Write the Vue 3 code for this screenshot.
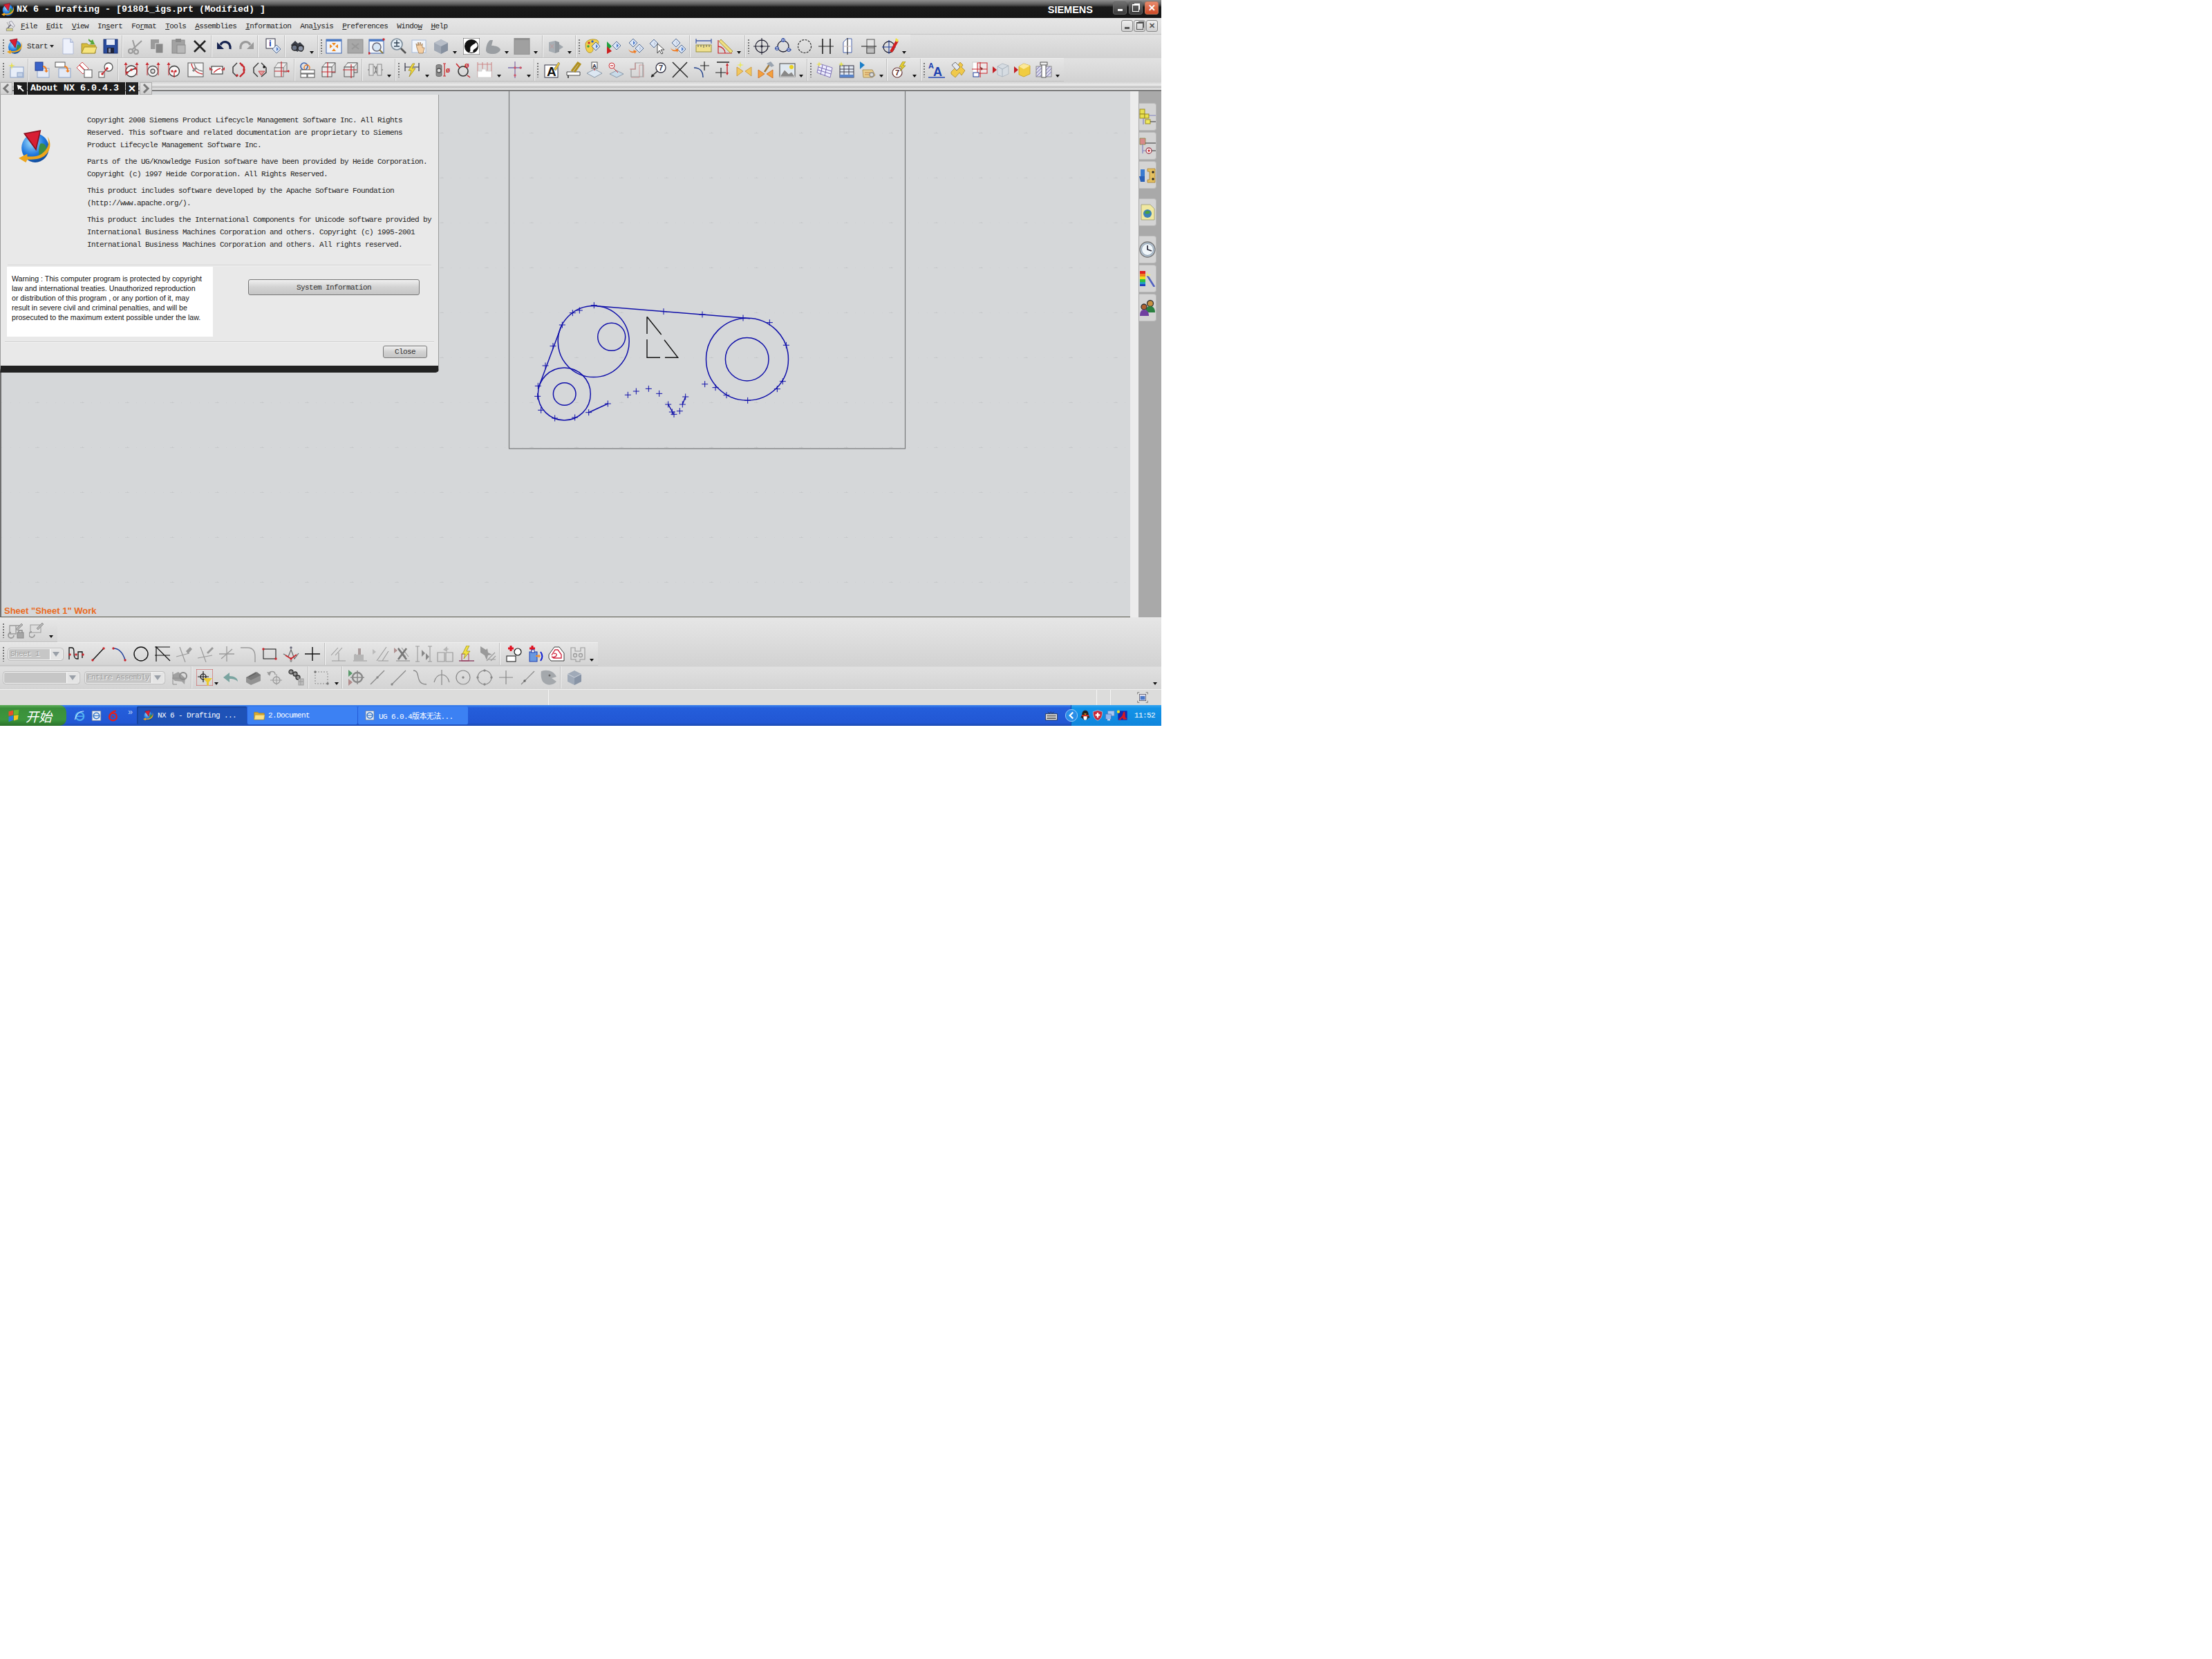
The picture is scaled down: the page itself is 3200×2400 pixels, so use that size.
<template>
  <div class="screen">
    <header class="title-bar">
      <svg class="title-logo" viewBox="0 0 24 24" v-html="icons.logo"></svg>
      <span class="title-text">NX 6 - Drafting - [91801_igs.prt (Modified) ]</span>
      <span class="siemens">SIEMENS</span>
      <div class="win-btns">
        <button class="win-btn"><i class="glyph-min"></i></button>
        <button class="win-btn"><i class="glyph-max"></i></button>
        <button class="win-btn win-close">✕</button>
      </div>
    </header>

    <nav class="menu-bar">
      <svg class="menu-icon" viewBox="0 0 24 24" v-html="icons.menuTool"></svg>
      <div class="menu-items">
        <span v-for="m in menus" :key="m.t">{{ m.t.slice(0, m.u) }}<u>{{ m.t[m.u] }}</u>{{ m.t.slice(m.u + 1) }}</span>
      </div>
      <div class="doc-btns">
        <button class="doc-btn"><i class="glyph-min dark"></i></button>
        <button class="doc-btn"><i class="glyph-max dark"></i></button>
        <button class="doc-btn">✕</button>
      </div>
    </nav>

    <div v-for="(row, r) in topRows" :key="r" class="tb-row">
      <div class="tb-wrap">
        <template v-for="(it, i) in row" :key="i">
          <i v-if="it.kind === 'space'" class="tb-space" :style="{ marginLeft: it.n + 'px' }"></i>
          <i v-else-if="it.kind === 'sep'" class="tb-sep"></i>
          <i v-else-if="it.kind === 'grip'" class="tb-grip"></i>
          <i v-else-if="it.kind === 'arrow'" class="tb-arrow"></i>
          <span v-else-if="it.kind === 'start'" class="start-cmd">
            <svg viewBox="0 0 24 24" v-html="icons.logo"></svg>
            <span>Start</span>
            <i class="tri"></i>
          </span>
          <span v-else class="tb-icon"><svg viewBox="0 0 24 24" v-html="icons[it.name]"></svg></span>
        </template>
      </div>
    </div>

    <div class="tab-band"></div>

    <main class="work">
      <section class="canvas">
        <svg class="sheet" viewBox="0 132 1636 761">
          <defs>
            <pattern id="gridp" x="54" y="452" width="65" height="65" patternUnits="userSpaceOnUse">
              <path d="M-3 0h6M0 -1v2M62 0h6M0 64v2" stroke="#bdbfc1" stroke-width="1" fill="none" />
              <path d="M13 0h1M26 0h1M39 0h1M52 0h1" stroke="#c6c8ca" stroke-width="1" fill="none" />
            </pattern>
          </defs>
          <rect x="0" y="132" width="1636" height="761" fill="url(#gridp)" />
          <rect x="736.5" y="128" width="573" height="521" fill="none" stroke="#77797b" stroke-width="1.2" />
          <g fill="none" stroke="#1010aa" stroke-width="1.5">
            <circle cx="858.7" cy="494" r="51.5" />
            <circle cx="884.7" cy="487.3" r="20" />
            <circle cx="816.3" cy="570" r="38" />
            <circle cx="816.7" cy="570" r="16.3" />
            <circle cx="1081" cy="519.7" r="59.5" />
            <circle cx="1080.7" cy="519.7" r="31.3" />
            <path d="M863.3 442.7L1085 460.7M779.3 560L812.7 470M851.7 596.7L879.3 584M966.7 585L975 600M987.3 585L991.7 574" />
          </g>
          <path d="M936 458.3V483M936 491V517.3H955M962 517.3H980.7L961 491.7M956.7 484L936 458.3" fill="none" stroke="#111" stroke-width="1.4" />
          <g stroke="#1010aa" stroke-width="1">
            <path v-for="(p, i) in marks" :key="i" :d="crossPath(p)" />
          </g>
        </svg>
        <span class="sheet-label">Sheet "Sheet 1" Work</span>
      </section>
      <aside class="side-gap"></aside>
      <aside class="res-bar">
        <div v-for="t in resTabs" :key="t.n" class="res-tab" :class="{ spaced: t.gap }">
          <svg viewBox="0 0 24 24" v-html="icons[t.n]"></svg>
        </div>
      </aside>
    </main>

    <div class="low-block">
      <div v-for="(row, r) in lowRows" :key="r" class="low-row">
        <div class="tb-wrap low-wrap" :class="{ flat: r === 2 }">
          <template v-for="(it, i) in row" :key="i">
            <i v-if="it.kind === 'space'" class="tb-space" :style="{ marginLeft: it.n + 'px' }"></i>
            <i v-else-if="it.kind === 'sep'" class="tb-sep"></i>
            <i v-else-if="it.kind === 'grip'" class="tb-grip"></i>
            <i v-else-if="it.kind === 'arrow'" class="tb-arrow"></i>
            <i v-else-if="it.kind === 'end'" class="tb-arrow tb-end"></i>
            <span v-else-if="it.kind === 'combo'" class="combo" :style="{ width: it.w + 'px' }">
              <span class="combo-text">{{ it.text }}</span>
              <i class="combo-btn"></i>
            </span>
            <span v-else class="tb-icon"><svg viewBox="0 0 24 24" v-html="icons[it.name]"></svg></span>
          </template>
        </div>
      </div>
    </div>

    <footer class="status-bar">
      <i class="st-cell st-a"></i>
      <i class="st-cell st-b"></i>
      <i class="st-cell st-c"></i>
      <svg class="st-icon" viewBox="0 0 24 24" v-html="icons.fullscreen"></svg>
    </footer>

    <div class="taskbar">
      <div class="start-btn">
        <svg viewBox="0 0 24 24" v-html="icons.flag"></svg>
        <span>开始</span>
      </div>
      <div class="quick">
        <svg viewBox="0 0 24 24" v-html="icons.ie"></svg>
        <svg viewBox="0 0 24 24" v-html="icons.ie2"></svg>
        <svg viewBox="0 0 24 24" v-html="icons.red6"></svg>
        <span class="more">»</span>
      </div>
      <div class="task active">
        <svg viewBox="0 0 24 24" v-html="icons.logo"></svg>
        <span>NX 6 - Drafting ...</span>
      </div>
      <div class="task">
        <svg viewBox="0 0 24 24" v-html="icons.folder"></svg>
        <span>2.Document</span>
      </div>
      <div class="task">
        <svg viewBox="0 0 24 24" v-html="icons.ie2"></svg>
        <span>UG 6.0.4版本无法...</span>
      </div>
      <svg class="kbd" viewBox="0 0 24 24" v-html="icons.keyboard"></svg>
      <div class="tray">
        <svg class="tray-first" viewBox="0 0 24 24" v-html="icons.chev"></svg>
        <svg viewBox="0 0 24 24" v-html="icons.qq"></svg>
        <svg viewBox="0 0 24 24" v-html="icons.shield"></svg>
        <svg viewBox="0 0 24 24" v-html="icons.netw"></svg>
        <svg viewBox="0 0 24 24" v-html="icons.trayRed"></svg>
        <span class="clock">11:52</span>
      </div>
    </div>

    <!-- About dialog, floats over the drawing area -->
    <div class="about">
      <div class="about-tab">
        <i class="tab-nav">
          <svg viewBox="0 0 12 16"><path d="M9 2L3 8l6 6" fill="none" stroke="#777" stroke-width="3" /></svg>
        </i>
        <i class="tab-pin">
          <svg viewBox="0 0 12 12"><path d="M2 2l8 8M2 2l4 1-3 3z" stroke="#fff" stroke-width="2" fill="#fff" /></svg>
        </i>
        <span class="tab-title">About NX 6.0.4.3</span>
        <i class="tab-x">✕</i>
        <i class="tab-nav">
          <svg viewBox="0 0 12 16"><path d="M3 2l6 6-6 6" fill="none" stroke="#777" stroke-width="3" /></svg>
        </i>
      </div>
      <div class="about-body">
        <div class="about-top">
          <svg class="about-logo" viewBox="0 0 24 24" v-html="icons.logo"></svg>
          <div class="about-copy">
            <p v-for="(para, i) in paragraphs" :key="i"><span v-for="(l, j) in para" :key="j">{{ l }}</span></p>
          </div>
        </div>
        <hr class="about-rule" />
        <div class="about-mid">
          <div class="warning">
            <span v-for="(l, i) in warning" :key="i">{{ l }}</span>
          </div>
          <button class="sys-btn">System Information</button>
        </div>
        <hr class="about-rule low" />
        <div class="about-foot">
          <button class="close-btn">Close</button>
        </div>
      </div>
    </div>
  </div>
</template>

<script setup>
const L = (d, c = '#333', w = 1.3) => `<path d="${d}" fill="none" stroke="${c}" stroke-width="${w}"/>`
const F = (d, c, s = 'none') => `<path d="${d}" fill="${c}" stroke="${s}" stroke-width=".8"/>`
const R = (x, y, w, h, f, s = 'none') => `<rect x="${x}" y="${y}" width="${w}" height="${h}" fill="${f}" stroke="${s}"/>`
const C = (x, y, r, f = 'none', s = '#333', w = 1.3) => `<circle cx="${x}" cy="${y}" r="${r}" fill="${f}" stroke="${s}" stroke-width="${w}"/>`
const T = (x, y, t, c, size = 12) => `<text x="${x}" y="${y}" fill="${c}" font-size="${size}" font-weight="700" font-family="Liberation Sans, sans-serif">${t}</text>`
const D = (x, y, c = '#4a78c8') => F(`M${x} ${y - 6}l6 6-6 6-6-6z`, '#dbe6f6', '#34507f') + F(`M${x} ${y - 3}l3 3-3 3z`, c)

const g = '#9a9a9a'
const g2 = '#b5b5b5'
const red = '#c8262c'
const blue = '#1f3f9a'

const dot = (x, y, c = red) => C(x, y, 1.7, c, 'none', 0)
const redArrows = L('M4 20V4M20 20V4', red, 1) + F('M4 1l-2.5 4h5zM20 1l-2.5 4h5z', red)

const icons = {
  logo:
    '<defs><radialGradient id="lg" cx=".38" cy=".3" r=".8"><stop offset="0" stop-color="#a8e4ff"/><stop offset=".55" stop-color="#1f78de"/><stop offset="1" stop-color="#0a3d88"/></radialGradient></defs>' +
    '<ellipse cx="11.5" cy="13" rx="9.5" ry="10" fill="url(#lg)"/>' +
    F('M15 10c3-1 5 2 4 5-1 3-4 4-5 3 0-3 0-6 1-8z', '#3d8c46') +
    F('M20 5c4 6 1 13-5 15-3 1-7 1-9 1l-1 2-5-3 6-3 0 2c3 0 7 0 10-2 4-3 6-7 4-12z', '#eda51c') +
    F('M4 3l11-2-3 13z', '#d81e34', '#8a0f1e'),
  menuTool: L('M3 19L12 8', '#556', 2) + F('M8 4l5-2 6 9-2 3-7-6z', '#e8e8ee', '#667') + R(3, 16, 12, 5, '#d8d48a', '#888') + L('M4 4l5 9', '#888', 1),

  new: F('M5 1h11l4 5v17H5z', '#eef2fc', '#a7b4d4') + L('M16 1v5h4', '#a7b4d4'),
  open: F('M1 8h8l2 2h10v12H1z', '#d8bc3a', '#9a8420') + F('M1 22l4-9h18l-3 9z', '#f6e47e', '#9a8420') + F('M11 1l4 3 2-2 3 7-7 0 2-2-4-3z', '#58a83c'),
  save: R(2, 2, 20, 20, '#2a4c9c', '#172f70') + R(6, 2, 12, 8, '#e6ebf6') + R(7, 14, 10, 8, '#20243a') + R(9, 15, 3, 6, '#8a93ad'),
  cut: C(5, 19, 3, 'none', g, 2) + C(13, 20, 3, 'none', g, 2) + L('M7 17L21 4M12 17L8 3', g, 2),
  copy: R(3, 2, 12, 14, g) + R(10, 8, 11, 14, '#888', '#ddd'),
  paste: R(3, 3, 18, 19, '#a2a2a2', '#888') + R(8, 1, 8, 5, '#8a8a8a') + R(10, 10, 12, 12, '#b8b8b8', '#8a8a8a'),
  del: L('M4 4L20 20M20 4L4 20', '#222', 2.6),
  undo: L('M6 10C9 3 21 4 20 16', '#15224f', 3.2) + F('M1 6l10 10H1z', '#15224f'),
  redo: L('M18 10C15 3 3 4 4 16', g, 3.2) + F('M23 6L13 16h10z', g),
  info: R(2, 1, 13, 14, '#fff', '#334') + T(6, 12, 'i', '#2036a0', 13) + D(17, 16),
  binoc: F('M2 10l6-6 4 4 3-2 6 6-3 8-5-3-1 3-7-3z', '#3b3f48') + C(7, 14, 4, '#6b7486', '#222') + C(16, 15, 4, '#8a92a4', '#222'),
  fit: R(1, 2, 22, 20, '#f0f4fa', '#3c63ad') + R(1, 2, 22, 3, '#4f7ec8') + F('M6 9l4 3-4 3zM18 9l-4 3 4 3zM9 7l3 4 3-4zM9 19l3-4 3 4z', '#ef8a20'),
  fitOff: R(1, 2, 22, 20, '#a8a8a8', '#909090') + L('M7 8l10 8M17 8L7 16', '#989898', 2),
  zoomWin: R(1, 2, 21, 20, '#f4f7fb', '#3c63ad') + R(1, 2, 21, 3, '#4f7ec8') + C(12, 13, 6, '#d6e6f4', '#667', 1.5) + L('M16 17l5 5', '#8a7a40', 2.2) + dot(22, 2) + dot(1, 22),
  zoomPM: C(10, 9, 8, '#e2ecf4', '#7a8a98', 1.6) + L('M6 7h8M10 3v8M6 12h8', '#345', 1.5) + L('M16 15l7 7', '#555', 2.6),
  pan: R(1, 3, 20, 18, '#f2f6fc', '#a9bbd8') + F('M8 14l-1-6 2 3 1-5 1 5 2-5 1 5 2-3 0 6 3 0-2 8H11z', '#f4cfa4', '#a07a50'),
  cube: F('M12 2l10 5v11l-10 5-10-5V7z', '#a0a8b4') + F('M12 12l10-5v11l-10 5z', '#8791a0') + F('M2 7l10-5 10 5-10 5z', '#b8bec8'),
  shade: R(0, 0, 24, 24, '#fff', '#444') + C(12, 12, 9.5, '#fff', '#111', 1.2) + F('M12 2.5a9.5 9.5 0 0 0-4 18c5-1 0-6 4-9 3-3 6-3 7-6-2-2-4-3-7-3z', '#111') + F('M21 12a9.5 9.5 0 0 1-6 9c-2-3 1-5 3-6z', '#111'),
  solid: F('M2 18c0-6 2-12 6-15h4l-2 8c6 0 12 2 13 6-2 4-6 6-11 6-6 0-10-2-10-5z', '#9a9ea2'),
  block: R(1, 0, 22, 24, '#a0a0a0', '#8a8a8a') + R(1, 0, 22, 3, '#8f8f8f'),
  view: F('M2 6l9-2v18l-9-3z', '#a8aeb4') + F('M11 4l6 2v14l-6 2z', '#92989e') + F('M17 9l6 4-6 4z', '#a0a6ac') + L('M4 9l5 6M9 9l-5 6', '#c09898', 1),

  palette: F('M2 9C2 3 12 0 19 3c4 3 1 8-3 8-3 0-3 3-3 5 0 4-3 6-6 5-4-1-5-7-5-12z', '#f2d04c', '#a88a20') + dot(7, 7, '#d03030') + dot(12, 5, '#3060c0') + dot(6, 12, '#30a040') + D(17, 12),
  dA: F('M2 5l7 7-7 7z', '#20a040') + F('M2 12l7 7-7 4z', '#cc2020') + D(16, 11),
  dB: D(9, 7) + D(18, 15, '#c0c8d8') + F('M2 16c3 4 6 4 8 3l-1-2 5 2-3 4 0-2c-3 1-7 0-9-5z', '#ef7a20'),
  dC: D(8, 8, '#c8d0e0') + F('M13 8l0 14 3-4 3 5 2-1-3-5 5 0z', '#fff', '#222'),
  dD: D(9, 7, '#c8d0e0') + D(17, 16) + F('M1 14c3 4 6 4 8 3l-1-2 5 2-3 4 0-2c-3 1-7 0-9-5z', '#ef7a20'),
  ruler: R(1, 10, 22, 10, '#efe08e', '#9a9040') + L('M4 10v3M8 10v3M12 10v4M16 10v3M20 10v3', '#776') + L('M1 4h22', blue, 1.2) + L('M1 1v7M23 1v7', blue, 1),
  angle: L('M2 3v19h20', red, 1.2) + L('M2 12a11 10 0 0 1 10 10', red) + F('M3 5l3-3 17 17-3 3z', '#eedd80', '#998830'),
  cross: C(12, 12, 9, 'none', '#223', 1.3) + L('M12 0v24M0 12h24', '#223', 1.1) + dot(12, 12, '#223'),
  circPts: C(12, 12, 8, 'none', '#223') + C(12, 3, 2.5, '#dde', blue, 1) + C(3, 15, 2.5, '#dde', blue, 1) + C(20, 17, 2.5, '#dde', blue, 1) + L('M12 0v6M0 15h6M17 17h7', blue, 1),
  circDash: `<circle cx="12" cy="12" r="9.5" fill="none" stroke="#333" stroke-width="1.2" stroke-dasharray="3 1.5"/>`,
  parallel: L('M7 1v22M18 1v22', '#222', 1.6) + L('M1 12h22', '#222', 1),
  sheetLine: F('M6 6l5-5h7v20H6z', '#fff', blue) + L('M12 0v24', '#222', 1.1) + L('M6 12h12', '#cbb', 1),
  cylLine: R(9, 2, 11, 20, '#e4e4e4', '#555') + R(9, 14, 11, 8, '#c0c0c0', '#555') + L('M1 12h22', '#333', 1.2),
  crossWand: C(10, 13, 8, 'none', '#223') + L('M10 3v20M0 13h20', blue, 1.1) + L('M22 4L13 20', '#d02020', 4) + F('M20 0l4 3-2 3-3-2z', '#f0e040'),

  sheetNew: R(4, 8, 19, 15, '#e8eef8', '#8ba2c8') + R(14, 16, 8, 6, '#c4d2e6', '#8ba2c8') + F('M6 1l1 4 4 1-4 1-1 5-1-5-4-1 4-1z', '#e6e050'),
  a1: R(6, 10, 17, 13, '#e4eaf6', '#8ba2c8') + R(3, 1, 11, 12, '#3a62c8', '#1f3a90') + F('M14 6c4 0 6 3 6 7l2 0-3 3-3-3 2 0c0-3-2-5-4-5z', '#ee7d20'),
  a2: R(6, 10, 17, 13, '#e4eaf6', '#8ba2c8') + R(1, 1, 14, 7, '#fff', '#555') + F('M14 6c4 0 6 3 6 7l2 0-3 3-3-3 2 0c0-3-2-5-4-5z', '#ee7d20'),
  a3: F('M1 9L9 1l9 9-8 8z', '#fff', red) + L('M5 5l9 9', red) + R(12, 12, 11, 11, '#fff', '#555'),
  a4: R(2, 15, 8, 8, '#fff', '#555') + C(16, 8, 6, '#fff', '#555') + L('M7 18L14 10', red, 1.4) + dot(7, 18) + dot(14, 10),
  b1: C(12, 14, 8, '#f8f8f8', '#333', 1.3) + L('M6 16l6-4 6-2', '#333', 1.4) + dot(6, 16) + dot(12, 12) + dot(18, 10) + redArrows,
  b2: C(12, 14, 7.5, '#f4f4f4', '#555') + C(12, 14, 3, '#ddd', '#555') + redArrows,
  b3: C(12, 14, 7.5, '#f8f8f8', '#333') + L('M12 14v9', red) + dot(9, 14) + dot(14, 14) + L('M4 20V5', red, 1) + F('M4 1l-2.5 4h5z', red),
  b4: R(1, 2, 22, 20, '#f4f4f4', '#555') + L('M6 3c1 8 8 14 16 15', red) + L('M10 3c1 6 5 10 12 11', '#777') + L('M8 14l5-5', '#888', 3),
  b5: R(4, 7, 16, 11, '#fff', '#222') + L('M1 12h5M18 12h5', red, 1.2) + L('M7 16c3-2 4-5 10-6', red) + F('M1 8l3 3-3 1zM23 8l-3 3 3 1z', red),
  b6: L('M10 2L4 8v8l6 6M14 2l6 6v8l-6 6', '#333', 1.4) + dot(17, 5) + dot(20, 12) + dot(10, 20) + L('M14 2l6 6v8l-6 6', red, 2.4),
  b7: L('M10 2L3 9v7l6 6M14 2l7 7v7l-7 6', '#333', 1.4) + F('M10 14l4 6 5-6z', '#e0a0a0', red) + dot(18, 8, '#111'),
  b8: R(7, 2, 13, 13, 'none', '#777') + F('M2 9l5-7h13l-5 7z', '#eee', '#777') + R(2, 9, 13, 13, '#e8e8e8', '#777') + L('M12 0v22M2 14h22', red, 1.2) + F('M23 12v4l-3-2z', red),
  c1: C(7, 7, 5, 'none', '#3c63ad', 1.6) + C(11, 9, 4, 'none', '#ee7d20', 1.4) + R(2, 12, 20, 5, '#fff', '#555') + R(2, 18, 9, 5, '#fff', '#555') + R(12, 18, 10, 5, '#fff', '#555'),
  c2: R(7, 2, 14, 14, 'none', '#555') + F('M2 8l5-6h14l-5 6z', '#f2f2f2', '#555') + R(2, 8, 14, 14, '#e8e8e8', '#555') + L('M10 1v22M1 15h20', red, 1.2),
  c3: R(8, 2, 14, 14, 'none', '#555') + F('M3 8l5-6h14l-5 6z', '#f2f2f2', '#555') + R(3, 8, 14, 14, '#e0e0e0', '#555') + L('M13 4v20M1 12h20', red, 1.2),
  d1: R(3, 4, 6, 16, '#e2e2e2', '#888') + R(15, 4, 6, 16, '#e2e2e2', '#888') + L('M10 7c3 0 3 10 4 10M10 17c3 0 3-10 4-10', '#777') + L('M1 12h2M21 12h2', '#888'),
  e1: L('M2 8h20M2 2v12M22 2v12', '#334', 1.2) + F('M13 3l-6 10h4l-3 9 9-12h-5l4-7z', '#f0da3c', '#a08c20'),
  e2: F('M4 6c0-2 8-2 8 0v14c0 2-8 2-8 0z', '#8a8a8a', '#555') + C(8, 13, 3, '#ddd', '#555') + L('M16 3v18M14 3h4M14 21h4', red, 1.2) + T(18, 16, 'ø', red, 10),
  e3: C(12, 14, 7, 'none', '#333', 1.6) + L('M2 3l5 6M18 20l4 3', red, 1.5) + T(14, 9, 'ø', red, 11),
  e4: L('M2 4h20M2 1v22M22 1v22M9 1v12M16 1v12', '#c88', 1.1) + F('M2 14h6v-3h6v3h8v9H2z', '#fff', '#ccc'),
  e5: L('M2 9h20', '#6a5ca8', 1.3) + L('M12 0v24', '#8a70a8', 1.3) + dot(12, 9, '#cc5566') + dot(20, 9, '#cc5566') + dot(12, 20, '#cc5566'),
  noteA: R(2, 5, 19, 18, '#fff', '#334') + T(5, 21, 'A', '#111', 19) + F('M15 11L22 1l2 2-6 10z', '#e8c040', '#886'),
  noteP: F('M3 15h19v5H3z', '#fff', '#222') + L('M5 20v5', '#111', 1.3) + L('M10 14L19 2l3 2-8 11', '#b09020', 3),
  noteA2: F('M1 17l11-6 11 6-11 6z', '#dce7f2', '#789') + L('M12 13V9', red, 1.2) + R(8, 1, 8, 9, '#fff', '#555') + T(9, 9, 'A', '#223', 8),
  noteM: F('M3 18l10-5 10 5-10 5z', '#c8dae8', '#789') + L('M7 8l8 8', red, 1) + C(6, 6, 4, '#fff', red, 1) + L('M4 6h4', red),
  stepDim: F('M3 23h12V5h6v18', 'none', '#c88') + L('M3 11v11h17V2H9v9z', '#999', 1.2) + L('M1 11h9M9 2v9', '#c88', 1),
  balloon: C(15, 9, 7, '#fff', '#334', 1.3) + T(12, 13, '7', '#334', 11) + L('M10 14L1 22', '#222', 1.3) + F('M1 23l1-5 4 3z', '#222'),
  bigX: L('M1 1l22 22M22 1L1 23', '#222', 1.4),
  curveX: L('M1 9c8 0 13 5 13 14', '#1f3f8a', 1.5) + L('M16 0v13M10 6h13', '#222', 1.2),
  dimX: L('M3 1h18', '#222', 1.5) + L('M1 16h15M9 9v14', '#222', 1.2) + L('M18 4v14', red, 1.4) + F('M18 2l-2 4h4zM18 20l-2-4h4z', red),
  wandX: F('M1 8l9 6-9 7zM22 8l-9 6 9 7z', '#f2c860', '#c89030') + F('M6 0l1 4 4 1-4 1-1 4-1-4-4-1 4-1z', '#e8e860'),
  hammerX: F('M1 12l9 6-9 6zM22 12l-9 6 9 6z', '#f5a03c', '#c86820') + L('M10 15L18 3', '#a07838', 2.4) + F('M13 3l6-3 5 6-4 2z', '#9aa4b0'),
  image: R(1, 3, 22, 19, '#dfe8f0', '#444') + F('M1 22l7-10 6 6 4-3 5 7z', '#888', '#eee') + C(18, 8, 3, '#e8d020', 'none', 0),
  tableNew: F('M4 3l19 6-3 14L1 16z', '#eef', '#6a5ca8') + L('M3 8l19 6M2 12l19 6M9 5L6 19M15 7l-3 14', '#6a5ca8', .9) + F('M4 0l1 3 3 1-3 1-1 3-1-3-3-1 3-1z', '#e8e060'),
  tableEdit: R(3, 6, 20, 17, '#dfe6f0', '#334') + L('M3 11h20M3 15h20M9 6v17M16 6v17', '#334', .9) + R(3, 19, 20, 4, '#5a84c8') + F('M5 0l1 3 3 1-3 1-1 3-1-3-3-1 3-1z', '#e0e050'),
  tag: F('M5 12l14 0 4 8-4 3H6z', '#ead090', '#a08040') + C(18, 19, 3, '#ddd', '#888') + F('M1 0l7 5-7 6z', '#1b7ec8') + L('M8 16h8M8 19h6', '#c08040', 1),
  key7: C(8, 16, 7, '#fff', '#633', 1.2) + T(5, 20, '7', '#522', 11) + F('M16 0l-5 8h4l-3 6 8-8h-4l4-6z', '#e8d030', '#988a20'),
  AA: T(0, 10, 'A', '#1c3fb0', 11) + T(7, 21, 'A', '#1c3fb0', 18) + L('M0 23h24', '#1c3fb0', 1.4),
  wrench: F('M2 15l10-10 3-4 4 4-2 3 5 5-5 7-3-4-6 7-6-5z', '#f0c94a', '#a8882c') + F('M3 5l5-4 7 7-5 5z', '#e4e8ef', '#555'),
  sheetBox: R(2, 1, 11, 21, '#fff', '#ccc') + R(9, 2, 14, 15, '#eee8e8', red) + L('M13 1v22M1 11h22', red, 1.1) + R(3, 16, 8, 6, '#fff', blue) + F('M12 7l5 3-2 3z', '#883333'),
  cubeRed: F('M0 7l6 5-6 5z', '#c42026') + F('M14 3l9 3v12l-9 4-7-3V7z', '#d6dce2', '#a8b2bc') + L('M7 7l7 4 9-5M14 11v11', '#a8b2bc', 1),
  cubeYel: F('M0 7l6 5-6 5z', '#c42026') + F('M14 3l9 3v12l-9 4-7-3V7z', '#f0cc40', '#c8a020') + F('M7 7l7 4 9-5-9-3z', '#fbe898'),
  hatchBolt: R(1, 7, 22, 15, '#d8d8ea', '#888') + L('M1 12l5-5M1 17l10-10M1 22L16 7M6 22L21 7M11 22l12-12M16 22l7-7', '#7a72b0', 1) + R(9, 3, 6, 20, '#fff', '#555') + R(7, 1, 10, 4, '#eee', '#555'),

  lock1: L('M3 5h9v12H3zM12 5h6', g, 1.3) + L('M5 15a4 4 0 1 0 4 4', g, 1.8) + F('M12 10l8-8 2 2-8 8z', g2, '#888') + R(14, 15, 9, 8, '#a5a5a5', '#888') + L('M16 15v-3h5v3', '#888', 1.4),
  lock2: R(2, 4, 15, 11, '#ddd', g) + L('M4 14a4 4 0 1 0 4 4', g, 1.8) + F('M11 9l8-8 2 2-8 8z', g2, '#888'),

  sk1: L('M1 20V3h4c3 0 3 4 3 8 0 3 0 8 4 8h2V9h6v9', '#111', 1.3) + dot(2, 13) + dot(11, 13) + dot(21, 13),
  sk2: L('M4 21L20 4', '#111', 1.4) + dot(4, 21) + dot(20, 4),
  sk3: L('M3 4c8 0 14 7 17 17', blue, 1.4) + dot(3, 4) + dot(20, 21),
  sk4: C(12, 12, 10, 'none', '#111', 1.4),
  sk5: L('M3 1v22M1 2h22M1 14h22M3 2l20 20', '#111', 1.2),
  sk6: L('M1 16L20 11M6 2l8 22', g, 1.2) + F('M15 8l6-6 3 3-6 7z', g),
  sk7: L('M1 18l21-4M5 2l8 22', g, 1.2) + F('M14 10l8-8 2 2-8 8z', g),
  sk8: L('M1 12h22M12 1v22', g, 1.3) + L('M4 19L20 5', g, 1.2),
  sk9: L('M1 3h10c8 0 11 5 11 13v8', g, 1.4),
  sk10: R(3, 5, 18, 14, 'none', '#111') + dot(3, 5) + dot(21, 19),
  sk11: L('M1 12l7 4 4-10 5 13 6-8', '#666', 1.2) + L('M4 14l8 5 8-6', red, 1.6) + dot(12, 3, '#667') + dot(12, 19) + F('M10 21h4l-1 3h-2z', g),
  sk12: L('M12 2v20M1 12h22', '#111', 1.4),
  con1: L('M2 14L12 3M8 14L18 3', g, 1.1) + L('M3 22h20M13 10v12', g, 1.1),
  con2: L('M3 22h20M6 22V12', g, 1.2) + F('M10 22V4l4 0 0 18z', '#a89a9a') + R(4, 13, 14, 9, g2),
  con3: F('M0 5l5 4-5 4z', '#bbb') + L('M6 22L20 2M14 22L23 8M8 22h15', g, 1.1),
  con4: L('M6 3L17 16M11 3l10 13', g, 1.1) + L('M3 22h20', g) + L('M6 4l12 16M18 4L6 20', '#777', 2.6) + F('M0 3l5 4-5 4z', '#b09090'),
  con5: L('M3 1v22M21 1v22M0 1h6M18 1h6M0 23h6M18 23h6', g, 1.1) + F('M9 6l5 5-5 5zM15 11l5 5-5 5z', '#888'),
  con6: L('M1 10v13h10V10zM13 10v13h10V10z', g, 1.2) + F('M9 6l6-5v3l3 1-3 1v3z', g2),
  con7: L('M1 22h22', '#8a4060', 1.4) + R(5, 12, 10, 10, 'none', '#a04060') + F('M12 0L6 12h4l-2 7 9-11h-5l4-8z', '#f0e040', '#a09020'),
  con8: F('M1 1l8 5 2-2 1 6 6 3-6 1-2 7-3-7-6-4z', g) + L('M10 22L22 10M16 22l7-7M12 20h11', g, 1.1),
  add1: L('M8 0v8M4 4h8', '#e01020', 3) + C(18, 9, 5, '#fff', '#111', 1.2) + R(2, 15, 13, 8, '#fff', '#111'),
  add2: L('M8 0v8M4 4h8', '#e01020', 3) + R(4, 9, 11, 14, '#6a98e0', '#2040b0') + R(7, 6, 4, 4, '#fff', '#2040b0') + L('M20 9c3 4 3 9 0 13', '#1020d0', 2) + F('M13 14h4v-2l3 3-3 3v-2h-4z', '#f09030'),
  add3: F('M1 13L9 2h7l7 9v11H4l-3-4z', '#fff', '#111') + L('M5 14l5-8h4l5 7v5H8l-3-2c2 1 6 1 7-2 1-2-2-4-4-2', '#d02840', 1.4),
  add4: L('M2 3h6v5h8V3h6v17h-7v3h-6v-3H2z', g, 1.1) + C(8, 14, 2.5, 'none', g) + C(16, 14, 2.5, 'none', g),
  asm: F('M2 8l8-4 10 9-1 9-4-4-10-1-3-3zM12 2l6 4', '#a0a0a0') + L('M2 4v18l6 0M1 13h18', '#8e8e8e', 1) + C(17, 10, 5, 'none', '#8a8a8a', 2),
  filter: R(0, 0, 24, 24, 'none', '#c84040') + L('M10 3v16M2 11h16', '#111', 1.1) + C(10, 11, 4, 'none', '#111', 1.2) + F('M10 13h13l-5 6v5l-3-1v-4z', '#eccb30'),
  backArr: F('M10 5l0 5c7 0 12 3 12 8-3-3-6-4-12-4v5L1 12z', '#7aa4a0'),
  printer: F('M2 12l16-8 5 5v8L9 23 2 19z', '#939393') + F('M2 12l7 4 14-7 0-1-7-4z', '#7a7a7a') + L('M6 11l10-5', '#555', 1),
  turnAxis: L('M3 8c2-6 10-6 10 0', g, 1.5) + F('M1 4l4 6 2-5z', g) + C(15, 16, 5, 'none', g) + L('M15 7v16M6 16h17', g, 1),
  chain: C(5, 4, 3, '#8f8f8f') + C(11, 7, 3, '#8f8f8f') + C(15, 12, 3, '#8f8f8f') + R(16, 14, 7, 9, '#c0c0c0', '#999') + L('M16 18h7M19 14v9', '#999', 1),
  boxDash: `<rect x="3" y="4" width="18" height="17" fill="none" stroke="#888" stroke-dasharray="2 2"/>` + dot(3, 4, '#777') + dot(21, 21, '#777'),
  snapMove: F('M1 1l6 5-6 5z', '#5a9a6c') + F('M1 14l6 5-6 5z', '#b08a8a') + C(14, 12, 7, 'none', '#888', 2.4) + L('M14 2v20M4 12h20', '#8a8a8a', 1.6),
  sn1: L('M2 22L22 2', '#888', 1.2) + dot(12, 12, '#888'),
  sn2: L('M2 22L22 2', '#888', 1.2) + dot(2, 22, '#888'),
  sn3: L('M2 2c7 0 6 8 8 13 2 6 6 7 11 7', '#888', 1.3),
  sn4: L('M12 1v22M1 19c2-8 6-11 11-11s9 3 11 11', '#888', 1.2),
  sn5: C(12, 12, 10, 'none', '#888', 1.2) + dot(12, 12, '#888'),
  sn6: C(12, 12, 10, 'none', '#888', 1.2) + dot(12, 2, '#888') + dot(2, 12, '#888') + dot(22, 12, '#888') + dot(12, 22, '#888'),
  sn7: L('M12 2v20M2 12h20', '#888', 1.2),
  sn8: L('M3 22L22 3', '#888', 1.2) + dot(8, 17, '#666'),
  sn9: F('M1 3c8-3 18-1 22 8l-7 2 7 5c-5 6-14 6-19 1C1 16 0 8 1 3z', '#a4a8ac') + C(13, 9, 1.5, '#666', 'none', 0),
  sn10: F('M12 2l10 5v11l-10 5-10-5V7z', '#a0aab8') + F('M12 12l10-5v11l-10 5z', '#8894a6') + L('M2 7l10 5 10-5', '#cdd3db', 1),

  resAsm: R(1, 1, 7, 7, '#e8e050', '#998a20') + R(1, 8, 7, 6, '#e8e050', '#998a20') + R(8, 8, 6, 6, '#e8e050', '#998a20') + L('M14 10h10M6 14v9', '#8080c0', 1.2) + R(9, 16, 7, 6, '#f0ea60', '#998a20') + L('M16 19h8', '#333', 1),
  resPart: F('M1 1h8v9H1z', '#d88a8a', '#884') + L('M9 8h15', '#333', 1) + L('M5 10v13M5 19h5', '#8080c0', 1.2) + C(14, 19, 4, '#fff', '#a04050') + dot(14, 19) + L('M18 19h6', '#333', 1),
  resReuse: R(2, 4, 6, 16, '#3a7ad0') + F('M0 14h8v8H2z', '#2a60b8') + F('M12 3h11v20H12v-4h3V7h-3z', '#e4c060', '#a88030') + dot(20, 8, '#222') + dot(20, 18, '#222'),
  resWeb: F('M3 1h13l6 6v16H3z', '#f0e8a0', '#9a9a70') + C(12, 14, 6, '#3a80b8', 'none', 0) + F('M8 13c2-4 6-4 8-1-1 2-4 4-8 1z', '#4aa040'),
  resClock: C(12, 12, 11, '#b8c8d8', '#777', 1.3) + C(12, 12, 8.5, '#f0f6fa', '#8a9aa8', 1) + L('M12 6v6l6 2', '#223', 1.6),
  resColor: R(1, 1, 8, 4, '#e02020') + R(1, 5, 8, 4, '#f08020') + R(1, 9, 8, 4, '#e8e020') + R(1, 13, 8, 4, '#30c040') + R(1, 17, 8, 3, '#20a0c0') + R(1, 20, 8, 3, '#2040c0') + L('M12 8l10 16', '#5060c0', 2.6) + F('M11 2l2 4 4 0-3 3-2-1-2 1z', '#e8e880'),
  resUsers: C(16, 6, 4.5, '#c89040') + F('M9 19c0-6 3-9 7-9s7 3 7 9z', '#2a8040') + C(7, 11, 4, '#b06030') + F('M1 24c0-6 2-9 6-9s7 3 7 9z', '#7040a0'),

  fullscreen: R(5, 5, 14, 14, '#dde', '#445') + R(7, 9, 10, 8, '#4a78c8') + L('M1 5V1h4M19 1h4v4M1 19v4h4M19 23h4v-4', '#666', 1.2),
  flag: F('M3 5l8-2 0 8-8 2z', '#e8502a') + F('M12 3l9-1-1 8-8 1z', '#6ab82e') + F('M3 14l8-2 0 8-8 3z', '#2c7ae0') + F('M12 12l8-1-1 8-7 2z', '#f6c71e'),
  ie: C(12, 13, 8, 'none', '#4fb0f0', 3.2) + L('M5 13h14', '#4fb0f0', 2.4) + L('M20 3c-8-1-16 6-18 17', '#bfe4ff', 1.6),
  ie2: R(3, 2, 18, 20, '#e8eef6', '#6a7a90') + C(12, 12, 6, 'none', '#3878c8', 2.4) + L('M7 12h10', '#3878c8', 1.8),
  red6: C(12, 14, 7.5, 'none', '#e02020', 3.4) + L('M18 2C10 3 6 8 5 14', '#e02020', 3.4) + C(12, 14, 2, '#e02020', 'none', 0),
  folder: F('M1 5h8l2 2h12v14H1z', '#d8a830', '#9a7a18') + F('M1 21l2-10h21l-2 10z', '#fbe184', '#b89a30'),
  keyboard: R(1, 9, 22, 12, '#fff', '#222') + L('M3 12h18M3 15h18M3 18h18', '#222', 1.4) + L('M5 5l3 3 3-3 3 3 3-3', '#333', 1),
  chev: C(12, 12, 11.5, '#2a8ee8', '#bfe2ff', 1) + L('M15 6l-6 6 6 6', '#fff', 3),
  qq: F('M12 1c5 0 7 4 7 9l3 7-3 0c-1 3-4 5-7 5s-6-2-7-5H2l3-7c0-5 2-9 7-9z', '#222') + F('M8 15c0-3 8-3 8 0 0 5-1 7-4 7s-4-2-4-7z', '#fff') + F('M5 11h14l1 3H4z', '#e03020') + F('M9 8h6l-3 3z', '#f0b020'),
  shield: F('M12 1l10 3c0 10-3 16-10 19C5 20 2 14 2 4z', '#c82838', '#eee') + L('M12 6v11M7 11h10', '#fff', 3.4),
  netw: R(7, 2, 14, 11, '#a8c8f0', '#6080c0') + R(2, 9, 12, 11, '#90b8f0', '#5070b0') + R(6, 20, 6, 3, '#dde'),
  trayRed: R(2, 2, 20, 20, '#1428b0') + C(3, 4, 3.2, '#f4e420', 'none', 0) + F('M3 21l8-8 3-9 3 0 1 12 4 4-8 1-3-4-4 5z', '#d81820'),
}

function parse(str) {
  return str.split(' ').map(tok => {
    if (tok === '|') return { kind: 'sep' }
    if (tok === ':') return { kind: 'grip' }
    if (tok === 'v') return { kind: 'arrow' }
    if (tok === 'START') return { kind: 'start' }
    if (tok === 'END') return { kind: 'end' }
    if (/^[+-]\d+$/.test(tok)) return { kind: 'space', n: Number(tok) }
    return { kind: 'icon', name: tok }
  })
}

const topRows = [
  parse(': START new open save | cut copy paste del | undo redo | +3 info | binoc v +2 | : fit fitOff zoomWin zoomPM pan cube v +3 shade solid v +1 block v +3 | view v +2 | : +1 palette dA dB dC dD | +1 ruler angle v +2 | : +1 cross circPts circDash parallel sheetLine cylLine crossWand v'),
  parse(': sheetNew +1 | a1 a2 a3 a4 +1 | b1 b2 b3 b4 b5 b6 b7 b8 +2 | c1 c2 c3 | d1 v +2 | : +1 e1 +2 v e2 e3 e4 +1 v +2 e5 v +1 | : +2 noteA noteP noteA2 noteM stepDim balloon bigX curveX dimX wandX hammerX image v +2 | : +2 tableNew tableEdit tag v +1 | key7 +1 v +2 | : AA wrench sheetBox cubeRed cubeYel hatchBolt v'),
]

const lowRows = [
  parse(': lock1 lock2 v'),
  [
    ...parse(':'),
    { kind: 'combo', text: 'Sheet 1', w: 79 },
    ...parse('+4 sk1 sk2 sk3 sk4 sk5 sk6 sk7 sk8 sk9 sk10 sk11 sk12 +1 | con1 con2 con3 con4 con5 con6 con7 con8 | +1 add1 add2 add3 add4 v'),
  ],
  [
    { kind: 'combo', text: '', w: 110 },
    ...parse('+8'),
    { kind: 'combo', text: 'Entire Assembly', w: 115 },
    ...parse('+6 asm | filter -3 v backArr +1 printer turnAxis chain +1 | boxDash +2 v +1 | +1 snapMove sn1 sn2 sn3 sn4 sn5 sn6 sn7 sn8 sn9 | +1 sn10 END'),
  ],
]

const menus = [
  { t: 'File', u: 0 },
  { t: 'Edit', u: 0 },
  { t: 'View', u: 0 },
  { t: 'Insert', u: 2 },
  { t: 'Format', u: 2 },
  { t: 'Tools', u: 0 },
  { t: 'Assemblies', u: 0 },
  { t: 'Information', u: 0 },
  { t: 'Analysis', u: 3 },
  { t: 'Preferences', u: 0 },
  { t: 'Window', u: 5 },
  { t: 'Help', u: 0 },
]

const resTabs = [
  { n: 'resAsm' },
  { n: 'resPart' },
  { n: 'resReuse' },
  { n: 'resWeb', gap: true },
  { n: 'resClock', gap: true },
  { n: 'resColor' },
  { n: 'resUsers' },
]

const paragraphs = [
  [
    'Copyright 2008 Siemens Product Lifecycle Management Software Inc. All Rights',
    'Reserved. This software and related documentation are proprietary to Siemens',
    'Product Lifecycle Management Software Inc.',
  ],
  [
    'Parts of the UG/Knowledge Fusion software have been provided by Heide Corporation.',
    'Copyright (c) 1997 Heide Corporation. All Rights Reserved.',
  ],
  [
    'This product includes software developed by the Apache Software Foundation',
    '(http://www.apache.org/).',
  ],
  [
    'This product includes the International Components for Unicode software provided by',
    'International Business Machines Corporation and others. Copyright (c) 1995-2001',
    'International Business Machines Corporation and others. All rights reserved.',
  ],
]

const warning = [
  'Warning : This computer program is protected by copyright',
  'law and international treaties.  Unauthorized reproduction',
  'or distribution of this program , or any portion of it, may',
  'result in severe civil and criminal penalties, and will be',
  'prosecuted to the maximum extent possible under the law.',
]

// cross marks, in the pixel grid of the sheet detail (3x from 720,400)
const marks = [
  [418, 125], [355, 147], [325, 158], [280, 210], [240, 302], [207, 387], [175, 475], [173, 520], [188, 580],
  [248, 615], [335, 612], [395, 590], [478, 552], [565, 514], [601, 498], [655, 487], [701, 508], [740, 555],
  [757, 588], [765, 598], [790, 584], [802, 555], [815, 522], [720, 152], [888, 165], [1065, 180], [1180, 200],
  [1252, 298], [1237, 455], [1213, 488], [1085, 538], [993, 515], [945, 482], [899, 467],
]

function crossPath([x, y]) {
  const px = 720 + x / 3
  const py = 400 + y / 3
  return `M${px - 4.5} ${py}h9M${px} ${py - 4.5}v9`
}
</script>

<style>
body {
  background: #fff;
}
</style>

<style scoped>
.screen {
  position: relative;
  width: 1680px;
  height: 1050px;
  overflow: hidden;
  font-family: "Liberation Mono", "Noto Sans CJK SC", monospace;
  font-size: 11px;
  letter-spacing: -0.6px;
  color: #222;
  background: #dcdcdc;
}

svg {
  display: block;
}

button {
  font: inherit;
  letter-spacing: inherit;
  padding: 0;
}

/* title bar */
.title-bar {
  height: 26px;
  display: flex;
  align-items: center;
  background: linear-gradient(#8f8f8f 0, #5e5e5e 6px, #333 9px, #1a1a1a 10px, #161616 100%);
  color: #fff;
  position: relative;
}

.title-logo {
  width: 20px;
  height: 20px;
  margin: 2px 2px 0 2px;
  flex: none;
}

.title-text {
  font-size: 13.33px;
  font-weight: 700;
  letter-spacing: 0;
  white-space: pre;
  padding-top: 1px;
}

.siemens {
  margin-left: auto;
  font-family: "Liberation Sans", sans-serif;
  font-size: 14.5px;
  font-weight: 700;
  letter-spacing: 0;
  padding-top: 1px;
}

.win-btns {
  display: flex;
  gap: 3px;
  margin-left: 29px;
  margin-right: 4px;
  padding-bottom: 4px;
}

.win-btn {
  width: 20px;
  height: 19px;
  border: 1px solid #666;
  border-radius: 3px;
  background: linear-gradient(#6e6e6e, #3a3a3a);
  color: #fff;
  display: flex;
  align-items: center;
  justify-content: center;
}

.win-close {
  background: linear-gradient(#e98a6c, #cf4a26);
  font-size: 13px;
  font-weight: 700;
  font-family: "Liberation Sans", sans-serif;
  border-color: #c0785c;
}

.glyph-min {
  display: block;
  width: 7px;
  height: 3px;
  margin-top: 7px;
  background: #fff;
}

.glyph-max {
  display: block;
  width: 8px;
  height: 8px;
  border: 1px solid #fff;
  border-top-width: 2px;
  box-shadow: 2px -2px 0 -1px #fff;
}

.glyph-min.dark {
  background: #555;
}

.glyph-max.dark {
  border-color: #555;
  box-shadow: 2px -2px 0 -1px #555;
}

/* menu */
.menu-bar {
  height: 24px;
  display: flex;
  align-items: center;
  background: linear-gradient(#e6e6e6, #dcdcdc);
  border-bottom: 1px solid #c4c4c4;
  box-sizing: border-box;
}

.menu-icon {
  width: 18px;
  height: 18px;
  margin-left: 7px;
  flex: none;
}

.menu-items {
  display: flex;
  gap: 13px;
  margin-left: 5px;
}

.doc-btns {
  margin-left: auto;
  margin-right: 5px;
  display: flex;
  gap: 1px;
}

.doc-btn {
  width: 17px;
  height: 17px;
  border: 1px solid #888;
  border-radius: 3px;
  background: linear-gradient(#eee, #cfcfcf);
  color: #555;
  font-size: 11px;
  font-weight: 700;
  font-family: "Liberation Sans", sans-serif;
  display: flex;
  align-items: center;
  justify-content: center;
}

.doc-btn .glyph-min {
  margin-top: 6px;
}

/* toolbars */
.tb-row {
  height: 34px;
  display: flex;
  background: linear-gradient(#e2e2e2, #d2d2d2);
}

.tb-wrap {
  display: flex;
  align-items: center;
  padding: 0 4px 0 3px;
  background: linear-gradient(#e6e6e6, #d2d2d2);
  border-top: 1px solid #eee;
  border-bottom: 1px solid #c2c2c2;
  box-sizing: border-box;
  position: relative;
}

.tb-icon {
  width: 31px;
  height: 24px;
  display: flex;
  justify-content: center;
  flex: none;
}

.tb-icon svg {
  width: 24px;
  height: 24px;
}

.tb-space {
  display: block;
  width: 0;
  flex: none;
}

.tb-sep {
  display: block;
  width: 1px;
  height: 32px;
  margin: 0 2px;
  background: #f2f2f2;
  box-shadow: -1px 0 0 #c0c0c0;
  flex: none;
}

.tb-grip {
  display: block;
  width: 4px;
  height: 22px;
  flex: none;
  background-image: radial-gradient(circle, #777 0.9px, transparent 1.1px);
  background-size: 4px 4px;
}

.tb-arrow {
  width: 10px;
  height: 24px;
  flex: none;
  display: block;
  position: relative;
}

.tb-arrow::after {
  content: "";
  position: absolute;
  left: 2px;
  bottom: 1px;
  border-top: 4px solid #111;
  border-left: 3px solid transparent;
  border-right: 3px solid transparent;
}

.start-cmd {
  width: 72px;
  margin-left: 3px;
  display: flex;
  align-items: center;
  flex: none;
  font-size: 11px;
}

.start-cmd svg {
  width: 24px;
  height: 24px;
  margin-right: 5px;
}

.tri {
  border-top: 4px solid #222;
  border-left: 3px solid transparent;
  border-right: 3px solid transparent;
  margin-left: 3px;
}

.tab-band {
  height: 14px;
  background: linear-gradient(#d0d0d0 0, #ececec 5px, #bcbcbc 8px, #dedede 10px, #e2e2e2 12px, #7d7d7d 12px, #7d7d7d 14px);
}

/* work area */
.work {
  height: 761px;
  display: flex;
}

.canvas {
  position: relative;
  width: 1635px;
  background: #d5d7d9;
  border-left: 2px solid #6e6e6e;
  border-bottom: 1px solid #55554a;
  box-sizing: border-box;
  flex: none;
}

.sheet {
  position: absolute;
  left: -2px;
  top: 0;
  width: 1636px;
  height: 761px;
}

.sheet-label {
  position: absolute;
  left: 4px;
  bottom: 1px;
  font-family: "Liberation Sans", sans-serif;
  font-size: 13px;
  font-weight: 700;
  letter-spacing: 0;
  color: #ea6a1e;
}

.side-gap {
  width: 12px;
  background: #ececec;
  flex: none;
}

.res-bar {
  flex: 1;
  background: #a9a9a9;
  padding-top: 17px;
  box-sizing: border-box;
  display: flex;
  flex-direction: column;
  gap: 2px;
}

.res-tab {
  width: 25px;
  height: 40px;
  background: #d4d4d4;
  border: 1px solid #bbb;
  border-left: none;
  border-radius: 0 4px 4px 0;
  box-sizing: border-box;
  display: flex;
  align-items: center;
  justify-content: center;
  margin-left: 1px;
}

.res-tab.spaced {
  margin-top: 12px;
}

.res-tab svg {
  width: 24px;
  height: 24px;
}

/* lower toolbars */
.low-block {
  height: 104px;
  padding-top: 2px;
  box-sizing: border-box;
  background: linear-gradient(#e6e6e6, #d2d2d2 68%, #c6c6c6 68%, #e0e0e0 69%, #d4d4d4 100%);
}

.low-row {
  height: 34px;
  display: flex;
}

.low-wrap {
  background: linear-gradient(#e6e6e6, #d4d4d4);
}

.low-wrap.flat {
  width: 100%;
  background: none;
  border: none;
  padding-left: 5px;
}

.tb-end {
  margin-left: auto;
}

.combo {
  height: 17px;
  margin-left: 5px;
  flex: none;
  display: flex;
  align-items: center;
  justify-content: space-between;
  box-sizing: border-box;
  background: #c6c6c6;
  border: 1px solid #f2f2f2;
  outline: 1px solid #bdbdbd;
  border-radius: 3px;
  color: #9e9e9e;
  text-shadow: 1px 1px 0 #f4f4f4;
  overflow: hidden;
}

.low-wrap.flat .combo {
  margin-left: 0;
}

.combo-text {
  padding-left: 2px;
  white-space: nowrap;
}

.combo-btn {
  width: 17px;
  height: 15px;
  background: #e4e4e4;
  border-left: 1px solid #fff;
  position: relative;
  flex: none;
}

.combo-btn::after {
  content: "";
  position: absolute;
  left: 3px;
  top: 4px;
  border-top: 7px solid #9aa0a8;
  border-left: 5px solid transparent;
  border-right: 5px solid transparent;
}

/* status */
.status-bar {
  height: 23px;
  display: flex;
  align-items: center;
  position: relative;
  background: #dcdcdb;
  border-top: 1px solid #f0f0f0;
  box-sizing: border-box;
}

.st-cell {
  display: block;
  height: 100%;
  border-right: 1px solid #f4f4f4;
  box-sizing: border-box;
  flex: none;
}

.st-a {
  width: 794px;
}

.st-b {
  width: 793px;
}

.st-c {
  width: 20px;
}

.st-icon {
  width: 16px;
  height: 16px;
  margin-left: 38px;
}

/* taskbar */
.taskbar {
  height: 30px;
  display: flex;
  align-items: center;
  background: linear-gradient(#3f86ee 0, #245edb 4px, #2257d4 85%, #1a49b0 100%);
  color: #fff;
  letter-spacing: -0.6px;
}

.start-btn {
  width: 96px;
  height: 100%;
  background: linear-gradient(#5fae5a 0, #3a8f3a 15%, #3d963d 70%, #2a712a 100%);
  border-radius: 0 10px 10px 0;
  display: flex;
  align-items: center;
  box-sizing: border-box;
  padding-left: 10px;
  flex: none;
}

.start-btn svg {
  width: 20px;
  height: 20px;
}

.start-btn span {
  font-family: "Noto Sans CJK SC", sans-serif;
  font-size: 19px;
  font-style: italic;
  letter-spacing: 0;
  margin-left: 7px;
}

.quick {
  display: flex;
  align-items: center;
  width: 102px;
  padding-left: 11px;
  box-sizing: border-box;
  gap: 7px;
  flex: none;
}

.quick svg {
  width: 17px;
  height: 17px;
}

.more {
  font-size: 12px;
  color: #b8d0f4;
  margin-left: 6px;
  margin-top: -8px;
}

.task {
  width: 159px;
  height: 26px;
  margin-right: 1px;
  display: flex;
  align-items: center;
  padding-left: 9px;
  box-sizing: border-box;
  background: #3c81f3;
  border-radius: 2px;
  flex: none;
  white-space: nowrap;
}

.task svg {
  width: 16px;
  height: 16px;
  margin-right: 5px;
}

.task.active {
  background: #1e52b7;
  box-shadow: inset 1px 1px 2px #123a8a;
}

.kbd {
  width: 18px;
  height: 18px;
  margin-left: auto;
  margin-right: 19px;
}

.tray {
  width: 131px;
  height: 100%;
  display: flex;
  align-items: center;
  background: linear-gradient(#37a5f0 0, #1293e8 15%, #1086dc 100%);
  border-left: 1px solid #124fa8;
  box-sizing: border-box;
  gap: 2px;
  flex: none;
}

.tray svg {
  width: 16px;
  height: 16px;
}

.tray .tray-first {
  margin-left: -9px;
  width: 18px;
  height: 18px;
  margin-right: 1px;
}

.clock {
  margin-left: 7px;
  font-size: 11px;
}

/* about dialog */
.about {
  position: absolute;
  left: 0;
  top: 119px;
  width: 635px;
}

.about-tab {
  height: 18px;
  display: flex;
  align-items: stretch;
  width: 220px;
}

.about-tab i {
  font-style: normal;
}

.tab-nav {
  width: 18px;
  background: linear-gradient(#e4e4e4, #cfcfcf);
  border: 1px solid #aaa;
  box-sizing: border-box;
  display: flex;
  align-items: center;
  justify-content: center;
}

.tab-nav svg {
  width: 12px;
  height: 16px;
}

.tab-pin {
  width: 19px;
  margin-left: 2px;
  background: #1c1c1c;
  display: flex;
  align-items: center;
  justify-content: center;
}

.tab-pin svg {
  width: 12px;
  height: 12px;
}

.tab-title {
  width: 141px;
  margin-left: 1px;
  padding-left: 4px;
  box-sizing: border-box;
  background: #1c1c1c;
  color: #fff;
  font-size: 13.33px;
  font-weight: 700;
  letter-spacing: 0;
  line-height: 18px;
  white-space: nowrap;
}

.tab-x {
  width: 18px;
  margin-left: 1px;
  margin-right: 2px;
  background: #222;
  color: #fff;
  font-family: "Liberation Sans", sans-serif;
  font-size: 14px;
  font-weight: 700;
  line-height: 18px;
  text-align: center;
  letter-spacing: 0;
}

.about-body {
  box-sizing: border-box;
  height: 402px;
  background: #e9e9e9;
  border-left: 1px solid #9a9a9a;
  border-right: 1px solid #9a9a9a;
  border-bottom: 10px solid #222;
  border-radius: 0 0 5px 0;
}

.about-top {
  height: 246px;
  box-sizing: border-box;
  display: flex;
  padding-top: 28px;
}

.about-logo {
  width: 50px;
  height: 50px;
  margin: 22px 0 0 26px;
  flex: none;
}

.about-copy {
  margin-left: 49px;
}

.about-copy p {
  margin: 0 0 6px;
}

.about-copy span {
  display: block;
  line-height: 18px;
  white-space: pre;
}

.about-rule {
  height: 1px;
  border: none;
  margin: 0 10px;
  background: #cfcfcf;
  box-shadow: 0 1px 0 #f6f6f6;
}

.about-rule.low {
  margin: 7px 6px 0;
}

.about-mid {
  display: flex;
  margin-top: 2px;
  height: 101px;
}

.warning {
  width: 298px;
  margin-left: 9px;
  padding: 10px 0 0 7px;
  box-sizing: border-box;
  background: #fff;
  color: #111;
  font-family: "Liberation Sans", sans-serif;
  font-size: 10.6px;
  letter-spacing: 0;
  flex: none;
}

.warning span {
  display: block;
  line-height: 14px;
  white-space: nowrap;
}

.sys-btn,
.close-btn {
  border: 1px solid #777;
  border-radius: 3px;
  background: linear-gradient(#f0f0f0, #d2d2d2 50%, #c6c6c6);
  color: #333;
  font-family: inherit;
}

.sys-btn {
  width: 248px;
  height: 23px;
  margin: 18px 0 0 51px;
}

.about-foot {
  display: flex;
  justify-content: flex-end;
  padding: 5px 16px 0 0;
}

.close-btn {
  width: 64px;
  height: 18px;
}
</style>
